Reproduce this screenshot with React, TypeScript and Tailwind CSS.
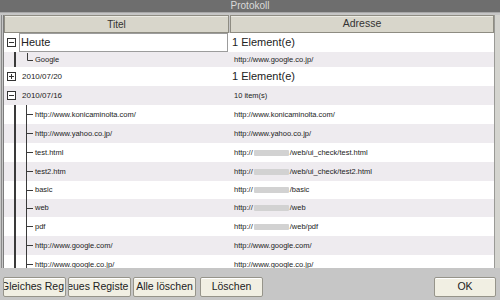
import React from "react";

const LINE = "#3a3a3a";

function Box({ minus }: { minus: boolean }) {
  return (
    <>
      <rect x="3.5" y="5.5" width="8" height="8" fill="#fff" stroke="#333" />
      <line x1="5" y1="9.5" x2="10" y2="9.5" stroke="#333" />
      {!minus && <line x1="7.5" y1="7" x2="7.5" y2="12" stroke="#333" />}
    </>
  );
}

function Blur() {
  return (
    <span className="inline-block w-[35px] h-[6px] bg-[#d2d2d2] rounded-[1px] align-middle mx-[1px] blur-[0.6px]" />
  );
}

type Child = { t: string; u: React.ReactNode; short?: boolean };

const children: Child[] = [
  { t: "http://www.konicaminolta.com/", u: "http://www.konicaminolta.com/" },
  { t: "http://www.yahoo.co.jp/", u: "http://www.yahoo.co.jp/" },
  { t: "test.html", u: <>http://<Blur />/web/ui_check/test.html</> },
  { t: "test2.htm", u: <>http://<Blur />/web/ui_check/test2.html</> },
  { t: "basic", u: <>http://<Blur />/basic</>, short: true },
  { t: "web", u: <>http://<Blur />/web</>, short: true },
  { t: "pdf", u: <>http://<Blur />/web/pdf</> },
  { t: "http://www.google.com/", u: "http://www.google.com/" },
  { t: "http://www.google.co.jp/", u: "http://www.google.co.jp/" },
];

function Btn({ label, w, shift }: { label: string; w: string; shift?: string }) {
  return (
    <div
      className={`${w} h-[20px] bg-[#f1efe3] border border-[#96948a] rounded-[2px] flex items-center justify-center overflow-hidden whitespace-nowrap text-[10.5px] text-[#222] shadow-[inset_0_1px_0_#ffffff]`}
    >
      <span className={shift}>{label}</span>
    </div>
  );
}

export default function App() {
  return (
    <div className="w-[500px] h-[300px] bg-[#c6c6c6] flex flex-col overflow-hidden font-['Liberation_Sans',Arial,sans-serif]">
      <div className="h-[12px] bg-[#6e6e6e] text-[#dadada] text-[10px] leading-[12px] text-center">Protokoll</div>
      <div className="h-[1px] bg-[#a8a8a8]" />
      <div className="h-[2px] bg-[#c6c6c6]" />
      <div className="flex h-[253px] shrink-0 pl-[1px]">
        <div className="w-[1px] bg-[#8a8a8a]" />
        <div className="w-[1px]" />
        <div className="flex flex-col w-[491px] border-l border-[#7c7c7c] bg-white overflow-hidden">
          {/* header */}
          <div className="flex h-[18px] shrink-0 gap-[1px] bg-[#c6c6c6]">
            <div className="w-[225px] border border-[#8e8c82] bg-[#d8d6cb] shadow-[inset_0_1px_0_#ecebe4] flex items-center justify-center text-[10px] text-[#333]">
              Titel
            </div>
            <div className="flex-1 border border-[#8e8c82] bg-[#d8d6cb] shadow-[inset_0_1px_0_#ecebe4] flex items-center justify-center text-[10.5px] text-[#333]">
              Adresse
            </div>
          </div>
          {/* Heute */}
          <div className="flex h-[19px] shrink-0 bg-white items-stretch">
            <div className="w-[225px] flex items-stretch">
              <svg width="15" height="19" className="shrink-0">
                <Box minus />
              </svg>
              <div className="w-[209px] border border-[#9c9c9c] bg-white flex items-center pl-[1px] text-[11px] text-[#222]">
                Heute
              </div>
            </div>
            <div className="flex-1 flex items-center pl-[3px] text-[11px] text-[#222]">1 Element(e)</div>
          </div>
          {/* Google */}
          <div className="flex h-[15px] shrink-0 bg-[#eeebef] items-stretch">
            <div className="w-[225px] flex items-center">
              <svg width="31" height="15" className="shrink-0">
                <rect x="10" y="0" width="2" height="15" fill={LINE} />
                <line x1="23.5" y1="1" x2="23.5" y2="8.5" stroke={LINE} />
                <line x1="23.5" y1="8.5" x2="29" y2="8.5" stroke={LINE} />
              </svg>
              <span className="text-[7.5px] text-[#222]">Google</span>
            </div>
            <div className="flex-1 flex items-center pl-[5px] text-[7.5px] text-[#222]">http://www.google.co.jp/</div>
          </div>
          {/* 2010/07/20 */}
          <div className="flex h-[19px] shrink-0 bg-white items-stretch">
            <div className="w-[225px] flex items-center">
              <svg width="18" height="19" className="shrink-0">
                <Box minus={false} />
              </svg>
              <span className="text-[8px] text-[#222]">2010/07/20</span>
            </div>
            <div className="flex-1 flex items-center pl-[3px] text-[11px] text-[#222]">1 Element(e)</div>
          </div>
          {/* 2010/07/16 */}
          <div className="flex h-[19px] shrink-0 bg-[#eeebef] items-stretch">
            <div className="w-[225px] flex items-center">
              <svg width="18" height="19" className="shrink-0">
                <Box minus />
              </svg>
              <span className="text-[8px] text-[#222]">2010/07/16</span>
            </div>
            <div className="flex-1 flex items-center pl-[5px] text-[7.5px] text-[#222]">10 item(s)</div>
          </div>
          {children.map((c, i) => (
            <div
              key={i}
              className={`flex shrink-0 items-stretch ${c.short ? "h-[18px]" : "h-[19px]"} ${i % 2 === 0 ? "bg-white" : "bg-[#eeebef]"}`}
            >
              <div className="w-[225px] flex items-center">
                <svg width="31" height="19" className="shrink-0 self-stretch h-full">
                  <rect x="10" y="0" width="2" height="19" fill={LINE} />
                  <line x1="22.5" y1="0" x2="22.5" y2="19" stroke={LINE} />
                  <line x1="22.5" y1="9.5" x2="29" y2="9.5" stroke={LINE} />
                </svg>
                <span className="text-[7.5px] text-[#222] whitespace-nowrap">{c.t}</span>
              </div>
              <div className="flex-1 flex items-center pl-[5px] text-[7.5px] text-[#222] whitespace-nowrap">{c.u}</div>
            </div>
          ))}
        </div>
        <div className="w-[6px] bg-[#d4d4cf] border-l border-[#9a9a96]" />
      </div>
      <div className="flex pt-[9px] pl-[3px] pr-[4px]">
        <div className="flex gap-[2px]">
          <Btn label="Gleiches Reg" w="w-[63px]" shift="-ml-[4px]" />
          <Btn label="Neues Registe" w="w-[63px]" shift="-ml-[11px]" />
          <Btn label="Alle löschen" w="w-[63px]" />
        </div>
        <div className="ml-[4px]">
          <Btn label="Löschen" w="w-[63px]" />
        </div>
        <div className="flex-1" />
        <Btn label="OK" w="w-[62px]" />
      </div>
    </div>
  );
}
